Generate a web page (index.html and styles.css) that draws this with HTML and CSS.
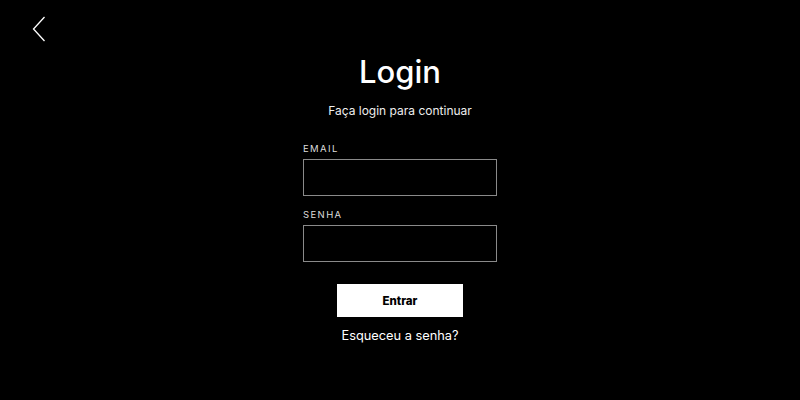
FILE: index.html
```html
<!DOCTYPE html>
<html lang="pt">
<head>
<meta charset="utf-8">
<link rel="stylesheet" href="styles.css">
</head>
<body>
<div class="page">
  <a class="back" href="#" aria-label="Voltar">
    <svg width="14" height="26" viewBox="0 0 14 26"><path d="M12.5 1 L1.5 13 L12.5 25" fill="none" stroke="#fff" stroke-width="1.3"/></svg>
  </a>
  <main class="card">
    <h1 class="title">Login</h1>
    <p class="subtitle">Faça login para continuar</p>
    <form class="form">
      <label class="field">
        <span class="label">EMAIL</span>
        <input class="input" type="email">
      </label>
      <label class="field">
        <span class="label">SENHA</span>
        <input class="input" type="password">
      </label>
      <button class="btn" type="button">Entrar</button>
      <a class="forgot" href="#">Esqueceu a senha?</a>
    </form>
  </main>
</div>
</body>
</html>
```

FILE: styles.css
```css
* { box-sizing: border-box; }
html, body { margin: 0; padding: 0; background: #000; }
body { font-family: "Inter", "Open Sans", sans-serif; color: #fff; width: 800px; height: 400px; overflow: hidden; }
.page { position: relative; width: 800px; height: 400px; }
.back { position: absolute; left: 32px; top: 16px; display: block; line-height: 0; }
.card { display: flex; flex-direction: column; align-items: center; padding-top: 50px; }
.title { margin: 0; font-size: 31px; font-weight: 500; line-height: 44px; letter-spacing: 0; }
.subtitle { margin: 9px 0 0; font-size: 12px; line-height: 16px; color: #eee; }
.form { display: flex; flex-direction: column; align-items: center; margin-top: 24px; }
.field { display: flex; flex-direction: column; width: 194px; margin-bottom: 13px; }
.label { font-size: 9.5px; letter-spacing: 1.4px; line-height: 12px; color: #ddd; margin-bottom: 4px; }
.input { width: 194px; height: 37px; background: #000; border: 1px solid #8a8a8a; border-radius: 0; outline: none; color: #fff; padding: 0 8px; }
.btn { margin-top: 9px; width: 126px; height: 33px; background: #fff; color: #000; border: 0; border-radius: 0; font-family: inherit; font-weight: 800; font-size: 11.5px; }
.forgot { margin-top: 11px; color: #fff; text-decoration: none; font-size: 12.8px; line-height: 16px; }
```
